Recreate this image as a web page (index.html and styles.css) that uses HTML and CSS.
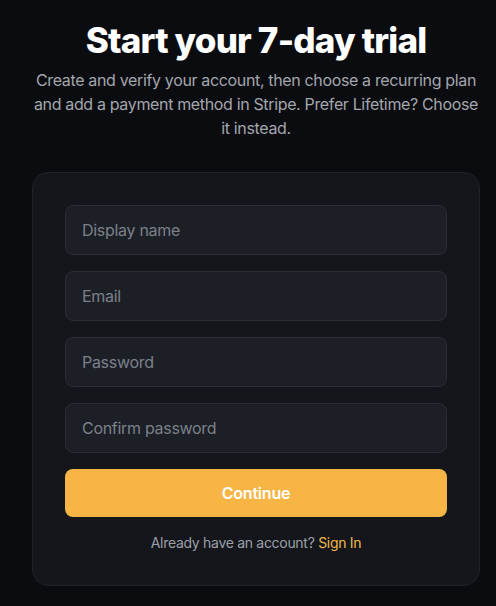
FILE: index.html
```html
<!DOCTYPE html>
<html lang="en">
<head>
<meta charset="utf-8">
<title>Start your 7-day trial</title>
<link rel="stylesheet" href="styles.css">
</head>
<body>
<main class="page">
  <h1 class="title">Start your 7-day trial</h1>
  <p class="lead">Create and verify your account, then choose a recurring plan and add a payment method in Stripe. Prefer Lifetime? Choose it instead.</p>
  <form class="card">
    <input class="field" type="text" placeholder="Display name">
    <input class="field" type="email" placeholder="Email">
    <input class="field" type="password" placeholder="Password">
    <input class="field" type="password" placeholder="Confirm password">
    <button class="btn" type="button">Continue</button>
    <p class="alt">Already have an account? <a class="link" href="#">Sign In</a></p>
  </form>
</main>
</body>
</html>
```
FILE: styles.css
```css
* { box-sizing: border-box; }
html, body { margin: 0; padding: 0; }
body {
  background: #0b0c0f;
  font-family: Inter, "Noto Sans", sans-serif;
  color: #f3f4f6;
  min-height: 606px;
  padding-left: 16px;
}
.page {
  width: 448px;
  margin: 0 auto;
  padding-top: 20px;
  display: flex;
  flex-direction: column;
  align-items: center;
}
.title {
  margin: 0;
  font-size: 35px;
  line-height: 40px;
  font-weight: 800;
  letter-spacing: -0.8px;
  color: #ffffff;
  text-align: center;
}
.lead {
  margin: 8px 0 0;
  font-size: 16px;
  line-height: 24px;
  letter-spacing: -0.35px;
  color: #a3a6ad;
  text-align: center;
}
.card {
  margin-top: 32px;
  width: 448px;
  background: #14161b;
  border: 1px solid #1f2128;
  border-radius: 16px;
  padding: 32px;
  display: flex;
  flex-direction: column;
  gap: 16px;
}
.field {
  height: 50px;
  width: 100%;
  background: #1c1f26;
  border: 1px solid #2a2d35;
  border-radius: 8px;
  padding: 0 16px;
  font-family: inherit;
  font-size: 16px;
  letter-spacing: -0.3px;
  color: #e5e7eb;
  outline: none;
}
.field::placeholder { color: #7c808a; }
.btn {
  height: 48px;
  width: 100%;
  background: #f6b545;
  border: none;
  border-radius: 8px;
  font-family: inherit;
  font-size: 16px;
  font-weight: 600;
  letter-spacing: -0.2px;
  color: #ffffff;
}
.alt {
  margin: 0;
  font-size: 14px;
  line-height: 20px;
  letter-spacing: -0.3px;
  text-align: center;
  color: #9ca0a8;
}
.link {
  color: #f0b84c;
  text-decoration: none;
}
```
